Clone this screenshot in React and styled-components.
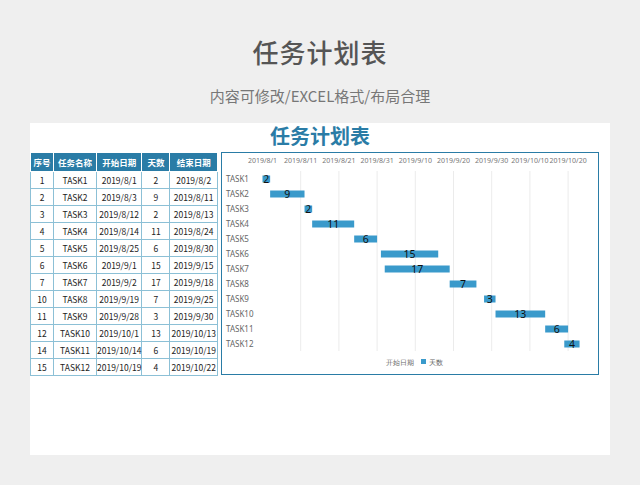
import React from 'react'
import styled, { createGlobalStyle } from 'styled-components'

const Global = createGlobalStyle`
  body { margin: 0; background: #efefef; font-family: "Noto Sans CJK SC", "Noto Sans", sans-serif; }
`

const Page = styled.div`
  width: 640px;
  height: 485px;
  display: flex;
  flex-direction: column;
  align-items: center;
`

const Title = styled.h1`
  margin: 36px 0 0;
  font-size: 26px;
  font-weight: 500;
  color: #555;
  letter-spacing: 1px;
  line-height: 32px;
`

const Sub = styled.div`
  margin-top: 18px;
  font-size: 15px;
  color: #777;
  line-height: 20px;
`

const Sheet = styled.div`
  margin-top: 17px;
  width: 580px;
  height: 332px;
  background: #fff;
`

const SheetTitle = styled.div`
  text-align: center;
  font-size: 20px;
  font-weight: 700;
  color: #2a7ca6;
  line-height: 26px;
  padding: 0 0 3px 0;
`

const Body = styled.div`
  display: flex;
  gap: 3px;
`

const Table = styled.table`
  border-collapse: collapse;
  width: 188px;
  font-size: 8.5px;
  color: #222;
  border: 1px solid #2a7ca6;
  td, th {
    border: 1px solid #8cc0d6;
    height: 16px;
    padding: 0;
    text-align: center;
    white-space: nowrap;
  }
  th {
    background: #2a7ca6;
    color: #fff;
    font-weight: 700;
    height: 18px;
    border-color: #fff;
  }
`

const ChartBox = styled.div`
  width: 378px;
  height: 223px;
  border: 1.5px solid #2a7ca6;
  box-sizing: border-box;
`

const tasks = [
  [0, 2], [2, 9], [11, 2], [13, 11], [24, 6], [31, 15], [32, 17], [49, 7], [58, 3], [61, 13], [74, 6], [79, 4],
]
const ends = ['2019/8/2','2019/8/11','2019/8/13','2019/8/24','2019/8/30','2019/9/15','2019/9/18','2019/9/25','2019/9/30','2019/10/13','2019/10/19','2019/10/22']
const starts = ['2019/8/1','2019/8/3','2019/8/12','2019/8/14','2019/8/25','2019/9/1','2019/9/2','2019/9/19','2019/9/28','2019/10/1','2019/10/14','2019/10/19']
const ids = [1,2,3,4,5,6,7,10,11,12,14,15]
const axis = ['2019/8/1','2019/8/11','2019/8/21','2019/8/31','2019/9/10','2019/9/20','2019/9/30','2019/10/10','2019/10/20']

function Chart() {
  const x0 = 40.5, px = 3.82
  return (
    <svg width="375" height="220" viewBox="0 0 375 220" fontFamily="Noto Sans, sans-serif">
      {axis.map((a, i) => (
        <g key={a}>
          <text x={x0 + i * 38.2} y={10} fontSize="7" fill="#777" textAnchor="middle">{a}</text>
          {i > 0 && <line x1={x0 + i * 38.2} x2={x0 + i * 38.2} y1={18} y2={198} stroke="#e6e6e6" strokeWidth="0.8" />}
        </g>
      ))}
      {tasks.map(([s, d], i) => {
        const y = 26 + i * 15
        return (
          <g key={i}>
            <text x={4} y={y + 3} fontSize="8" fill="#666">TASK{i + 1}</text>
            <rect x={x0 + s * px} y={y - 3.5} width={d * px} height={7} fill="#3a9acb" />
            <text x={x0 + s * px + d * px / 2} y={y + 4} fontSize="10.5" fill="#111" textAnchor="middle">{d}</text>
          </g>
        )
      })}
      <text x={164} y={212} fontSize="7" fill="#666">开始日期</text>
      <rect x={199} y={206} width={5} height={5} fill="#3a9acb" />
      <text x={207} y={212} fontSize="7" fill="#666">天数</text>
    </svg>
  )
}

export default function App() {
  return (
    <Page>
      <Global />
      <Title>任务计划表</Title>
      <Sub>内容可修改/EXCEL格式/布局合理</Sub>
      <Sheet>
        <SheetTitle>任务计划表</SheetTitle>
        <Body>
          <Table>
            <thead>
              <tr><th>序号</th><th>任务名称</th><th>开始日期</th><th>天数</th><th>结束日期</th></tr>
            </thead>
            <tbody>
              {tasks.map(([, d], i) => (
                <tr key={i}>
                  <td style={{ width: 22 }}>{ids[i]}</td>
                  <td style={{ width: 42 }}>TASK{i + 1}</td>
                  <td style={{ width: 44 }}>{starts[i]}</td>
                  <td style={{ width: 27 }}>{d}</td>
                  <td>{ends[i]}</td>
                </tr>
              ))}
            </tbody>
          </Table>
          <ChartBox><Chart /></ChartBox>
        </Body>
      </Sheet>
    </Page>
  )
}
